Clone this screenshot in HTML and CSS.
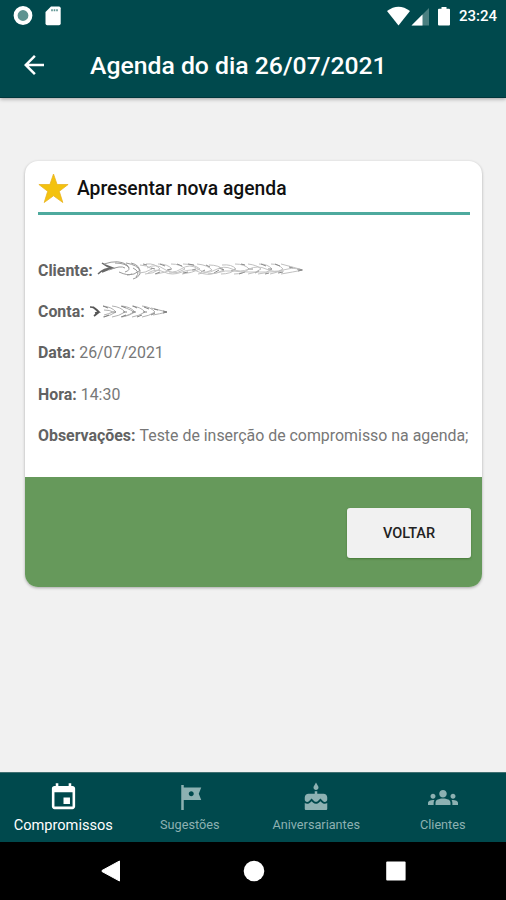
FILE: index.html
```
<!DOCTYPE html>
<html lang="pt-BR">
<head>
  <meta charset="UTF-8" />
  <meta name="viewport" content="width=device-width, initial-scale=1.0" />
  <title>Agenda do dia</title>
  <link rel="stylesheet" href="styles.css">
</head>
<body>
  <header class="top">
    <div class="status-bar">
      <svg width="20" height="20" viewBox="0 0 20 20">
        <circle cx="10" cy="9.5" r="7.4" fill="#5d9391" stroke="#fff" stroke-width="4" />
      </svg>
      <svg width="16" height="20" viewBox="0 0 16 20">
        <path fill="#fff" d="M6 .5h8a1.700 1.700 0 0 1 1.700 1.700v15.300a1.700 1.700 0 0 1-1.700 1.700H2.200a1.700 1.700 0 0 1-1.700-1.700V6z" />
        <path d="M7 3.200v2M9.500 3.200v2M12 3.200v2" stroke="#5d9391" stroke-width="1.600" />
      </svg>
      <div class="status-right">
        <svg width="66" height="22" viewBox="0 0 66 22">
          <path fill="#fff" d="M0 6Q11.500-2.500 23 6L11.500 20.500z" />
          <path fill="#4a7f80" d="M42 3v17.500H24.500z" />
          <path fill="#fff" d="M35.500 9.500v11h-11z" />
          <path fill="#fff" d="M54.500 2h5v1.800h2.500a1 1 0 0 1 1 1v14.700a1 1 0 0 1-1 1H52a1 1 0 0 1-1-1V4.800a1 1 0 0 1 1-1h2.500z" />
        </svg>
        <span class="clock">23:24</span>
      </div>
    </div>
    <div class="app-bar">
      <svg width="30" height="30" viewBox="0 0 24 24">
        <path fill="#fff" d="M20 11H7.830l5.590-5.590L12 4l-8 8 8 8 1.410-1.410L7.830 13H20v-2z" />
      </svg>
      <h1>Agenda do dia 26/07/2021</h1>
    </div>
  </header>

  <main>
    <section class="card">
      <div class="card-body">
        <div class="card-title">
          <svg width="31" height="31" viewBox="0 0 31 31">
            <path fill="#f3c20f" stroke="#eab422" stroke-width=".8" d="M15.500 1l3.600 10.500h11l-8.800 6.800 3.500 11.200-9.300-6.700-9.300 6.700 3.500-11.200L.9 11.500h11z" />
          </svg>
          <h2>Apresentar nova agenda</h2>
        </div>
        <p><b>Cliente:</b>
          <svg width="210" height="22" viewBox="0 0 210 22" fill="none">
            <path stroke="#686868" stroke-width="1.500" d="M1 15q6-6 14-6M5 4q5 4 10 5q-5 2-10 4M8 6l8 3-8 2" />
            <path stroke="#999" d="M7 5q15-5 23 1q5 5-2 7M12 11q12-5 16-2M18 4q11 0 14 5M22 13q9 4 13 2M29 4q12 2 14 8M34 4q10 2 9 11q-2 4-7 5M36 9q8 4 3 9M30 16q8 0 12-4" />
            <path stroke="#c0c0c0" d="M43 6q7 0 12 4-7 4-13 4M49 5q9-1 14 5-7 5-15 5M61 5q10 0 14 5-7 4-16 5M74 5q10 0 14 5-7 5-16 4M86 5q11 0 17 5-8 4-18 5M100 5q11 1 15 6-6 3-14 4M112 6q10 0 15 5-7 4-16 4M125 6q10-1 14 4-5 5-15 5M138 5q10 0 14 5-6 5-15 5M151 5q9 1 13 5-5 4-13 5M162 5q9 0 13 5-6 5-14 5M174 5q8 0 12 5-6 4-13 5M184 5q8 2 22 6-10 2-22 4" />
            <path stroke="#8a8a8a" d="M46 5l4 1M54 9l4 1M63 5l5 2M70 11l4-1M80 5l5 2M91 5l6 1M95 11l4-1M109 6l4 2M117 14l5-3M122 9l5 2M134 12l4-2M144 5l4 1M151 10l5 0M158 14l4-2M164 5l5 2M171 10l4 0M178 5l5 2M181 14l5-1M192 8l4 1M200 10l5 1-4 1M58 15l5-2M86 14l5-1M104 13l4-2M142 15l6-2M168 15l4-1" />
            <path stroke="#c4c4c4" d="M50 9q9-5 17 1t17 0 17 0 17 1 17-1 17 0 17 0 17 1 17-1M51 14q8-5 16-1t18 0 17 0 17 1 17-2 17 1 17 0 17-1" />
          </svg>
        </p>
        <p><b>Conta:</b>
          <svg width="80" height="22" viewBox="0 0 80 22" fill="none">
            <path stroke="#555" stroke-width="1.700" d="M1 6q5 0 9 5l-5 4M4 6l6 5-4 1" />
            <path stroke="#b0b0b0" d="M14 5q9 1 13 6-6 4-13 5M23 5q9 1 13 6-6 4-13 5M33 5q9 1 13 6-6 4-13 5M43 5q9 1 13 6-6 4-13 5M53 5q9 1 13 6-6 4-13 5M62 7q8 2 16 4-8 2-14 3M15 9q6 0 9 2-5 2-9 3M37 7q5 2 8 4-5 3-9 4" />
            <path stroke="#808080" d="M14 5l5 2M24 11l3 0M15 16l5-2M32 5l5 2M34 11l4 0M32 16l5-2M44 5l4 2M43 11l4 0M48 16l5-2M55 6l5 2M54 11l4 0M62 14l4-2M65 8l4 1M74 10l4 1-4 1" />
          </svg>
        </p>
        <p><b>Data:</b> <span>26/07/2021</span></p>
        <p><b>Hora:</b> <span>14:30</span></p>
        <p><b>Observações:</b> <span>Teste de inserção de compromisso na agenda;</span></p>
      </div>
      <div class="card-actions">
        <button type="button">VOLTAR</button>
      </div>
    </section>
  </main>

  <nav class="tabs">
    <a class="tab active">
      <svg width="31" height="31" viewBox="0 0 24 24"><path d="M17 12h-5v5h5v-5zM16 1v2H8V1H6v2H5c-1.110 0-1.990.9-1.990 2L3 19c0 1.100.89 2 2 2h14c1.100 0 2-.9 2-2V5c0-1.100-.9-2-2-2h-1V1h-2zm3 18H5V8h14v11z" /></svg>
      <span>Compromissos</span>
    </a>
    <a class="tab">
      <svg width="30" height="30" viewBox="0 0 24 24"><path d="M21 4H7V2H5v20h2v-8h14l-2-5 2-5zm-6 5c0 1.100-.9 2-2 2s-2-.9-2-2 .9-2 2-2 2 .9 2 2z" /></svg>
      <span>Sugestões</span>
    </a>
    <a class="tab">
      <svg width="30" height="30" viewBox="0 0 24 24"><path d="M12 6c1.110 0 2-.9 2-2 0-.38-.1-.73-.29-1.030L12 0l-1.710 2.970c-.19.3-.29.65-.29 1.030 0 1.100.9 2 2 2zm4.600 9.990l-1.070-1.070-1.080 1.070c-1.300 1.300-3.580 1.310-4.890 0l-1.070-1.070-1.090 1.070C6.750 16.640 5.880 17 4.960 17c-.73 0-1.400-.23-1.960-.61V21c0 .55.45 1 1 1h16c.55 0 1-.45 1-1v-4.610c-.56.38-1.230.61-1.960.61-.92 0-1.790-.36-2.440-1.010zM18 9h-5V7h-2v2H6c-1.660 0-3 1.340-3 3v1.540c0 1.080.88 1.960 1.960 1.960.52 0 1.020-.2 1.380-.57l2.140-2.130 2.130 2.130c.74.74 2.030.74 2.770 0l2.140-2.130 2.130 2.130c.37.37.86.57 1.380.57 1.080 0 1.960-.88 1.960-1.960V12C21 10.340 19.660 9 18 9z" /></svg>
      <span>Aniversariantes</span>
    </a>
    <a class="tab">
      <svg width="30" height="30" viewBox="0 0 24 24"><path d="M12 12.750c1.630 0 3.070.39 4.240.9 1.080.48 1.760 1.560 1.760 2.730V18H6v-1.610c0-1.180.68-2.260 1.760-2.730 1.170-.52 2.610-.91 4.240-.91zM4 13c1.100 0 2-.9 2-2s-.9-2-2-2-2 .9-2 2 .9 2 2 2zm1.130 1.100c-.37-.06-.74-.1-1.130-.1-.99 0-1.930.21-2.780.58C.48 14.900 0 15.620 0 16.430V18h4.500v-1.610c0-.83.23-1.610.63-2.290zM20 13c1.100 0 2-.9 2-2s-.9-2-2-2-2 .9-2 2 .9 2 2 2zm4 3.430c0-.81-.48-1.530-1.220-1.850-.85-.37-1.790-.58-2.780-.58-.39 0-.76.04-1.130.1.4.68.63 1.460.63 2.290V18H24v-1.570zM12 6c1.660 0 3 1.340 3 3s-1.340 3-3 3-3-1.340-3-3 1.340-3 3-3z" /></svg>
      <span>Clientes</span>
    </a>
  </nav>

  <div class="system-nav">
    <svg width="22" height="22" viewBox="0 0 22 22"><path d="M2 10.500L19.500 1v20L2 11.500z" fill="#fff" stroke="#fff" /></svg>
    <svg width="22" height="22" viewBox="0 0 22 22"><circle cx="11" cy="11" r="10.300" fill="#fff" /></svg>
    <svg width="22" height="22" viewBox="0 0 22 22"><rect x="1.200" y="1.500" width="19.400" height="19" rx="1" fill="#fff" /></svg>
  </div>
</body>
</html>
```

FILE: styles.css
```
* {
  box-sizing: border-box;
}
body {
  margin: 0;
  height: 900px;
  display: flex;
  flex-direction: column;
  overflow: hidden;
  font-family: Roboto, sans-serif;
  background-color: #f1f1f1;
}
h1, h2, p {
  margin: 0;
}
svg {
  display: block;
  flex: none;
}

/* top bars */
.top {
  height: 98px;
  background-color: #00494d;
  border-bottom: 1px solid #00363b;
  box-shadow: 0 1px 4px rgba(0, 0, 0, 0.35);
  color: #fff;
}
.status-bar {
  height: 32px;
  display: flex;
  align-items: center;
  gap: 12px;
  padding: 0 9px 0 13px;
}
.status-right {
  margin-left: auto;
  display: flex;
  align-items: center;
  gap: 6px;
}
.clock {
  font-size: 15px;
  font-weight: 500;
}
.app-bar {
  height: 65px;
  display: flex;
  align-items: center;
  padding-left: 19px;
}
h1 {
  margin-left: 41px;
  padding-top: 2px;
  font-size: 24.75px;
  font-weight: 500;
  white-space: nowrap;
}

/* appointment card */
main {
  flex: 1;
  padding: 63px 24px 0 25px;
}
.card {
  height: 426px;
  display: flex;
  flex-direction: column;
  border-radius: 13px;
  overflow: hidden;
  background-color: #fff;
  box-shadow: 0 1px 3px rgba(0, 0, 0, 0.3);
}
.card-body {
  flex: 1;
  padding: 12px 12px 0 13px;
  color: #777;
}
.card-title {
  height: 42px;
  display: flex;
  align-items: flex-start;
  gap: 8px;
  margin-bottom: 34.6px;
  border-bottom: 3px solid #4eaa9e;
  color: #111;
}
h2 {
  font-size: 19.3px;
  line-height: 31px;
  font-weight: 500;
}
.card-body p {
  height: 41.3px;
  display: flex;
  align-items: center;
  gap: 4px;
  font-size: 15.9px;
  white-space: nowrap;
}
.card-body b {
  font-weight: 700;
  color: #626262;
}
.card-actions {
  height: 110px;
  display: flex;
  align-items: center;
  justify-content: flex-end;
  padding: 2px 11px 0 0;
  background-color: #66995b;
}
button {
  width: 124px;
  height: 50px;
  border: none;
  border-radius: 3px;
  background-color: #f1f1f1;
  box-shadow: 0 1px 2px rgba(40, 90, 20, 0.5);
  color: #222;
  font: 500 14.5px Roboto, sans-serif;
}

/* bottom tabs */
.tabs {
  height: 70px;
  display: grid;
  grid-template-columns: repeat(4, 1fr);
  background-color: #00494d;
  border-top: 1px solid #3f6f71;
}
.tab {
  display: flex;
  flex-direction: column;
  align-items: center;
  padding-top: 9px;
  color: #8db1b2;
  font-size: 12.7px;
}
.tab svg {
  height: 31px;
  fill: currentColor;
}
.tab span {
  line-height: 24px;
}
.tab.active {
  color: #fff;
  font-size: 14.6px;
}

.system-nav {
  height: 58px;
  display: grid;
  grid-template-columns: repeat(3, 142.5px);
  justify-content: center;
  justify-items: center;
  align-items: center;
  padding-left: 1px;
  background-color: #000;
}
```
